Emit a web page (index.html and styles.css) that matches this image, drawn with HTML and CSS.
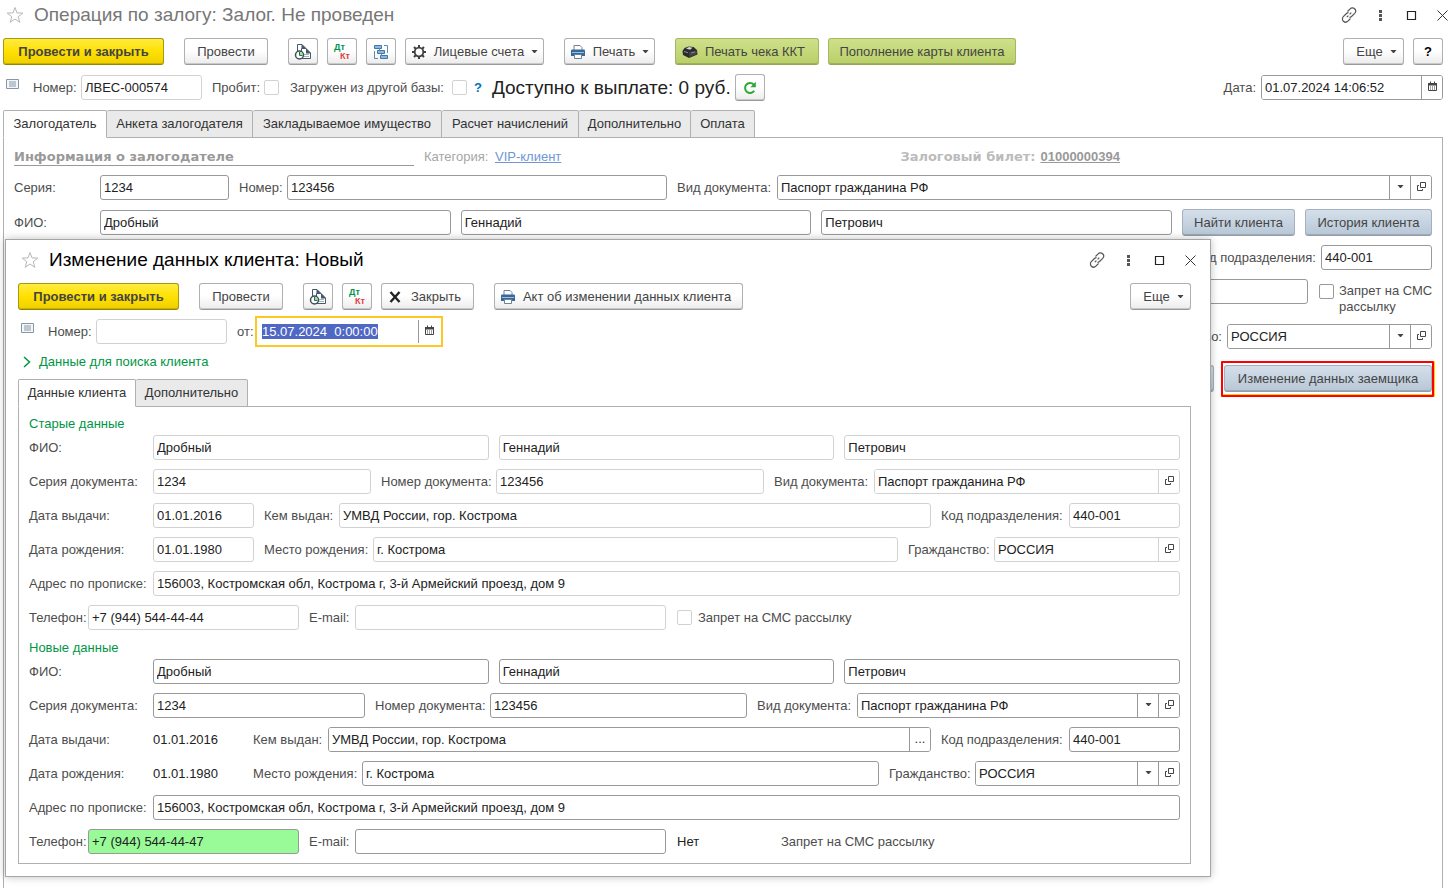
FILE: index.html
```html
<!DOCTYPE html>
<html lang="ru">
<head>
<meta charset="utf-8">
<title>Операция по залогу</title>
<link rel="stylesheet" href="styles.css">
</head>
<body>
<svg class="sprite" aria-hidden="true">
  <symbol id="i-star" viewBox="0 0 18 18"><path d="M9 1.500l2 5.400 5.800.2-4.600 3.600 1.600 5.600L9 13l-4.800 3.300 1.600-5.600L1.200 7.100 7 6.900z" fill="none" stroke="currentColor"/></symbol>
  <symbol id="i-link" viewBox="0 0 16 16"><path d="M6.500 4.500l2.600-2.600a3.100 3.100 0 0 1 4.600 4.400l-3.200 3.200a3 3 0 0 1-2 .8M9.500 11.500l-2.600 2.600a3.100 3.100 0 0 1-4.600-4.400l3.200-3.200a3 3 0 0 1 2-.8M5.800 10.200l1.600-1.600M8.600 7.400l1.700-1.700" fill="none" stroke="currentColor" stroke-width="1.200"/></symbol>
  <symbol id="i-dots" viewBox="0 0 16 16"><path d="M7 3h3v3H7zM7 7h3v3H7zM7 11h3v3H7z" fill="currentColor"/></symbol>
  <symbol id="i-max" viewBox="0 0 16 16"><path d="M4.500 4.500h8v8h-8z" fill="none" stroke="#222" stroke-width="1.200"/></symbol>
  <symbol id="i-close" viewBox="0 0 16 16"><path d="M3.500 3.500l10 10M13.500 3.500l-10 10" fill="none" stroke="#333"/></symbol>
  <symbol id="i-report" viewBox="0 0 18 18"><path d="M3.500 10V1.500H8l3.500 3.500V10z" fill="#fff" stroke="#46586a"/><path d="M7.500 1v4.500H12z" fill="#46586a"/><path d="M7.500 5.500H12l4.500 4.500v5.500h-9z" fill="#fff" stroke="#46586a"/><path d="M12 5v5.500h5z" fill="#46586a"/><path d="M10 11.500h5M10 13.500h5" stroke="#a3b1be"/><circle cx="5.500" cy="12" r="4" fill="#fff" stroke="#3d4c5c" stroke-width="1.500"/><path d="M5.500 9v3h3a3 3 0 0 0-3-3z" fill="#8fe39a"/><path d="M5.500 9v3.500h3" fill="none" stroke="#1f7a35"/></symbol>
  <symbol id="i-tree" viewBox="0 0 18 18"><g fill="#8fb6dc" stroke="#4278a5"><path d="M2.500 2.500h7v3h-7zM5.500 7.500h7v3h-7zM8.500 12.500h7v3h-7z"/></g><path d="M12 2.500h3.500V10M2.500 8v7.500H6M9.500 10.500v2M7.500 5.500v2" fill="none" stroke="#5c8cb4"/></symbol>
  <symbol id="i-gear" viewBox="0 0 16 16"><g stroke="#404040" fill="none"><circle cx="8" cy="8" r="4.300" stroke-width="1.800"/><path stroke-width="2" d="M8 1v3M8 12v3M1 8h3M12 8h3M3 3l2.200 2.200M10.800 10.800L13 13M13 3l-2.200 2.200M5.200 10.800L3 13"/></g></symbol>
  <symbol id="i-print" viewBox="0 0 16 16"><path d="M4 6V1.500h6l2 2V6" fill="#fff" stroke="#6d8296"/><path d="M1 6.500Q1 5.500 2 5.500h12q1 0 1 1V12H1z" fill="#376a98"/><path d="M2 8.500h12" stroke="#9cc0df"/><path d="M4.500 10.500h7v4h-7z" fill="#fff" stroke="#6d8296"/></symbol>
  <symbol id="i-kkt" viewBox="0 0 18 16"><path d="M1.500 7l2-3 4-1.500 5 .5 3.500 3 .5 4.500L8 14l-6-3z" fill="#2c2c2e"/><path d="M5 4.500l3-1.500 3.500.7-2.500 2z" fill="#d5d8d8"/><path d="M8 8l8-1.500-.5 4-7 2.500z" fill="#414345"/><path d="M3 7.500l4 1.200M10 9l4-1" stroke="#8a8d8e"/></symbol>
  <symbol id="i-refresh" viewBox="0 0 16 16"><path d="M12.200 10.800A5 5 0 1 1 11.500 4.300" fill="none" stroke="#2fa636" stroke-width="2"/><path d="M13.800 1.700v5.500H8.300z" fill="#2fa636"/></symbol>
  <symbol id="i-list" viewBox="0 0 14 12"><path d="M.5.5h12v9H.5z" fill="#f4f7fa" stroke="#8796a5"/><path d="M3 3h7M3 5h7M3 7h7" stroke="#8796a5"/></symbol>
  <symbol id="i-cal" viewBox="0 0 11 11"><path d="M1.500 2.500h8v7h-8z" fill="#fff" stroke="#444"/><path d="M1 2h9v2.500H1zM3 .5h1V2H3zM7 .5h1V2H7z" fill="#444"/><path d="M3 6h1M5 6h1M7 6h1M3 8h1M5 8h1M7 8h1" stroke="#444"/></symbol>
  <symbol id="i-open" viewBox="0 0 11 11"><path d="M4.500 1.500h5v5h-5z" fill="none" stroke="#444"/><path d="M3 4.500H1.500v5h5V8" fill="none" stroke="#444"/></symbol>
  <symbol id="i-down" viewBox="0 0 7 4"><path d="M0.500 0h6L4 3H3z" fill="#444"/></symbol>
  <symbol id="i-x" viewBox="0 0 14 14"><path d="M2.500 2L11.500 12M11.500 2L2.500 12" stroke="#222" stroke-width="2.400"/></symbol>
  <symbol id="i-chev" viewBox="0 0 8 12"><path d="M1 1l5.500 5L1 11" fill="none" stroke="#009646" stroke-width="1.500"/></symbol>
</svg>

<main class="window">
  <header class="titlebar">
    <svg class="star"><use href="#i-star"/></svg>
    <h1 class="title title-muted">Операция по залогу: Залог. Не проведен</h1>
    <div class="winbtns">
      <button class="winbtn" aria-label="Ссылка"><svg><use href="#i-link"/></svg></button>
      <button class="winbtn" aria-label="Меню"><svg><use href="#i-dots"/></svg></button>
      <button class="winbtn" aria-label="Развернуть"><svg><use href="#i-max"/></svg></button>
      <button class="winbtn" aria-label="Закрыть"><svg><use href="#i-close"/></svg></button>
    </div>
  </header>

  <div class="toolbar">
    <button class="btn btn-primary">Провести и закрыть</button>
    <button class="btn btn-post">Провести</button>
    <div class="btn-set">
      <button class="btn btn-icon" aria-label="Отчет"><svg class="ic18"><use href="#i-report"/></svg></button>
      <button class="btn btn-icon btn-dtkt"><span class="dt">Дт</span><span class="kt">Кт</span></button>
      <button class="btn btn-icon" aria-label="Структура"><svg class="ic18"><use href="#i-tree"/></svg></button>
      <button class="btn btn-accounts"><svg class="ic16"><use href="#i-gear"/></svg>Лицевые счета<svg class="caret"><use href="#i-down"/></svg></button>
    </div>
    <button class="btn btn-print"><svg class="ic16"><use href="#i-print"/></svg>Печать<svg class="caret"><use href="#i-down"/></svg></button>
    <div class="btn-set">
      <button class="btn btn-green btn-kkt"><svg class="ic18"><use href="#i-kkt"/></svg>Печать чека ККТ</button>
      <button class="btn btn-green btn-card">Пополнение карты клиента</button>
    </div>
    <div class="btn-set push">
      <button class="btn btn-more">Еще<svg class="caret"><use href="#i-down"/></svg></button>
      <button class="btn btn-icon btn-help">?</button>
    </div>
  </div>

  <div class="headrow">
    <svg class="list-ic"><use href="#i-list"/></svg>
    <label class="lbl num-lbl" for="m-num">Номер:</label>
    <input class="inp ro num-inp" id="m-num" value="ЛВЕС-000574">
    <label class="lbl check-lbl" for="m-prob">Пробит:</label>
    <input type="checkbox" class="chk ro" id="m-prob">
    <label class="lbl loaded-lbl" for="m-load">Загружен из другой базы:</label>
    <input type="checkbox" class="chk ro" id="m-load">
    <a class="hint" href="#">?</a>
    <span class="avail">Доступно к выплате: 0 руб.</span>
    <button class="btn btn-icon" aria-label="Обновить"><svg class="ic16"><use href="#i-refresh"/></svg></button>
    <label class="lbl push" for="m-date">Дата:</label>
    <span class="combo date-main"><input class="inp" id="m-date" value="01.07.2024 14:06:52"><button class="cb" aria-label="Календарь"><svg class="ic11"><use href="#i-cal"/></svg></button></span>
  </div>

  <nav class="tabs tabs-main">
    <button class="tab active">Залогодатель</button>
    <button class="tab t2">Анкета залогодателя</button>
    <button class="tab t3">Закладываемое имущество</button>
    <button class="tab t4">Расчет начислений</button>
    <button class="tab t5">Дополнительно</button>
    <button class="tab t6">Оплата</button>
  </nav>

  <section class="panel panel-main">
    <div class="inforow">
      <h2 class="section">Информация о залогодателе</h2>
      <span class="muted">Категория:</span>
      <a class="vip" href="#">VIP-клиент</a>
      <span class="ticket">Залоговый билет:</span>
      <a class="ticket-no" href="#">01000000394</a>
    </div>
    <div class="row m-doc">
      <label class="lbl" for="m-ser">Серия:</label><input class="inp" id="m-ser" value="1234">
      <label class="lbl" for="m-no">Номер:</label><input class="inp" id="m-no" value="123456">
      <label class="lbl" for="m-kind">Вид документа:</label>
      <span class="combo"><input class="inp" id="m-kind" value="Паспорт гражданина РФ"><button class="cb" aria-label="Выбрать"><svg class="caret"><use href="#i-down"/></svg></button><button class="cb" aria-label="Открыть"><svg class="ic11"><use href="#i-open"/></svg></button></span>
    </div>
    <div class="row m-fio">
      <label class="lbl" for="m-f">ФИО:</label>
      <div class="names"><input class="inp" id="m-f" value="Дробный"><input class="inp" aria-label="Имя" value="Геннадий"><input class="inp" aria-label="Отчество" value="Петрович"></div>
      <button class="btn btn-blue btn-find">Найти клиента</button>
      <button class="btn btn-blue btn-hist">История клиента</button>
    </div>
    <div class="row m-end">
      <label class="lbl" for="m-code">Код подразделения:</label><input class="inp w-code" id="m-code" value="440-001">
    </div>
    <div class="row m-end m-sms">
      <input class="inp w-mail" aria-label="E-mail">
      <input type="checkbox" class="chk" id="m-ban"><label class="lbl sms-lbl" for="m-ban">Запрет на СМС<br>рассылку</label>
    </div>
    <div class="row m-end">
      <label class="lbl" for="m-cit">Гражданство:</label>
      <span class="combo w-cit"><input class="inp" id="m-cit" value="РОССИЯ"><button class="cb" aria-label="Выбрать"><svg class="caret"><use href="#i-down"/></svg></button><button class="cb" aria-label="Открыть"><svg class="ic11"><use href="#i-open"/></svg></button></span>
    </div>
    <div class="row m-end m-actions">
      <button class="btn btn-blue">История</button>
      <span class="callout"><button class="btn btn-blue btn-change">Изменение данных заемщика</button></span>
    </div>
  </section>
</main>

<section class="dialog" role="dialog" aria-labelledby="d-title">
  <header class="titlebar">
    <svg class="star"><use href="#i-star"/></svg>
    <h1 class="title" id="d-title">Изменение данных клиента: Новый</h1>
    <div class="winbtns">
      <button class="winbtn" aria-label="Ссылка"><svg><use href="#i-link"/></svg></button>
      <button class="winbtn" aria-label="Меню"><svg><use href="#i-dots"/></svg></button>
      <button class="winbtn" aria-label="Развернуть"><svg><use href="#i-max"/></svg></button>
      <button class="winbtn" aria-label="Закрыть"><svg><use href="#i-close"/></svg></button>
    </div>
  </header>
  <div class="toolbar">
    <button class="btn btn-primary">Провести и закрыть</button>
    <button class="btn btn-post">Провести</button>
    <div class="btn-set">
      <button class="btn btn-icon" aria-label="Отчет"><svg class="ic18"><use href="#i-report"/></svg></button>
      <button class="btn btn-icon btn-dtkt"><span class="dt">Дт</span><span class="kt">Кт</span></button>
      <button class="btn btn-close"><svg class="ic14"><use href="#i-x"/></svg>Закрыть</button>
    </div>
    <button class="btn btn-act"><svg class="ic16"><use href="#i-print"/></svg>Акт об изменении данных клиента</button>
    <button class="btn btn-more push">Еще<svg class="caret"><use href="#i-down"/></svg></button>
  </div>
  <div class="headrow">
    <svg class="list-ic"><use href="#i-list"/></svg>
    <label class="lbl num-lbl" for="d-num">Номер:</label>
    <input class="inp ro d-num" id="d-num">
    <label class="lbl from-lbl" for="d-date">от:</label>
    <span class="combo date-focus"><input class="inp" id="d-date" value="15.07.2024  0:00:00"><button class="cb" aria-label="Календарь"><svg class="ic11"><use href="#i-cal"/></svg></button></span>
  </div>
  <button class="expander"><svg><use href="#i-chev"/></svg>Данные для поиска клиента</button>
  <nav class="tabs">
    <button class="tab active d1">Данные клиента</button>
    <button class="tab d2">Дополнительно</button>
  </nav>
  <div class="panel panel-dlg">
    <h2 class="group">Старые данные</h2>
    <div class="rows">
      <div class="row r-wide"><label class="lbl" for="o-f">ФИО:</label>
        <div class="names"><input class="inp ro" id="o-f" value="Дробный"><input class="inp ro" aria-label="Имя" value="Геннадий"><input class="inp ro" aria-label="Отчество" value="Петрович"></div></div>
      <div class="row o-doc"><label class="lbl" for="o-s">Серия документа:</label><input class="inp ro" id="o-s" value="1234">
        <label class="lbl" for="o-n">Номер документа:</label><input class="inp ro" id="o-n" value="123456">
        <label class="lbl" for="o-k">Вид документа:</label><span class="combo ro"><input class="inp" id="o-k" value="Паспорт гражданина РФ"><button class="cb" aria-label="Открыть"><svg class="ic11"><use href="#i-open"/></svg></button></span></div>
      <div class="row o-iss"><label class="lbl" for="o-d">Дата выдачи:</label><input class="inp ro" id="o-d" value="01.01.2016">
        <label class="lbl" for="o-w">Кем выдан:</label><input class="inp ro" id="o-w" value="УМВД России, гор. Кострома">
        <label class="lbl" for="o-c">Код подразделения:</label><input class="inp ro" id="o-c" value="440-001"></div>
      <div class="row o-birth"><label class="lbl" for="o-b">Дата рождения:</label><input class="inp ro" id="o-b" value="01.01.1980">
        <label class="lbl" for="o-p">Место рождения:</label><input class="inp ro" id="o-p" value="г. Кострома">
        <label class="lbl" for="o-z">Гражданство:</label><span class="combo ro"><input class="inp" id="o-z" value="РОССИЯ"><button class="cb" aria-label="Открыть"><svg class="ic11"><use href="#i-open"/></svg></button></span></div>
      <div class="row r-wide"><label class="lbl" for="o-a">Адрес по прописке:</label><input class="inp ro" id="o-a" value="156003, Костромская обл, Кострома г, 3-й Армейский проезд, дом 9"></div>
      <div class="row r-phone"><label class="lbl" for="o-t">Телефон:</label><input class="inp ro" id="o-t" value="+7 (944) 544-44-44">
        <label class="lbl" for="o-e">E-mail:</label><input class="inp ro" id="o-e">
        <span class="ban"><input type="checkbox" class="chk ro" id="o-x"><label class="lbl" for="o-x">Запрет на СМС рассылку</label></span></div>
    </div>
    <h2 class="group">Новые данные</h2>
    <div class="rows">
      <div class="row r-wide"><label class="lbl" for="n-f">ФИО:</label>
        <div class="names"><input class="inp" id="n-f" value="Дробный"><input class="inp" aria-label="Имя" value="Геннадий"><input class="inp" aria-label="Отчество" value="Петрович"></div></div>
      <div class="row n-doc"><label class="lbl" for="n-s">Серия документа:</label><input class="inp" id="n-s" value="1234">
        <label class="lbl" for="n-n">Номер документа:</label><input class="inp" id="n-n" value="123456">
        <label class="lbl" for="n-k">Вид документа:</label><span class="combo"><input class="inp" id="n-k" value="Паспорт гражданина РФ"><button class="cb" aria-label="Выбрать"><svg class="caret"><use href="#i-down"/></svg></button><button class="cb" aria-label="Открыть"><svg class="ic11"><use href="#i-open"/></svg></button></span></div>
      <div class="row n-iss"><span class="lbl">Дата выдачи:</span><span class="val">01.01.2016</span>
        <label class="lbl" for="n-w">Кем выдан:</label><span class="combo"><input class="inp" id="n-w" value="УМВД России, гор. Кострома"><button class="cb">...</button></span>
        <label class="lbl" for="n-c">Код подразделения:</label><input class="inp" id="n-c" value="440-001"></div>
      <div class="row n-birth"><span class="lbl">Дата рождения:</span><span class="val">01.01.1980</span>
        <label class="lbl" for="n-p">Место рождения:</label><input class="inp" id="n-p" value="г. Кострома">
        <label class="lbl" for="n-z">Гражданство:</label><span class="combo"><input class="inp" id="n-z" value="РОССИЯ"><button class="cb" aria-label="Выбрать"><svg class="caret"><use href="#i-down"/></svg></button><button class="cb" aria-label="Открыть"><svg class="ic11"><use href="#i-open"/></svg></button></span></div>
      <div class="row r-wide"><label class="lbl" for="n-a">Адрес по прописке:</label><input class="inp" id="n-a" value="156003, Костромская обл, Кострома г, 3-й Армейский проезд, дом 9"></div>
      <div class="row r-phone"><label class="lbl" for="n-t">Телефон:</label><input class="inp changed" id="n-t" value="+7 (944) 544-44-47">
        <label class="lbl" for="n-e">E-mail:</label><input class="inp" id="n-e">
        <span class="ban"><span class="val no">Нет</span><span class="lbl">Запрет на СМС рассылку</span></span></div>
    </div>
  </div>
</section>
<script src="app.js"></script>
</body>
</html>
```
FILE: styles.css
```css
* { box-sizing: border-box; }
html, body { height: 100%; }
body { margin: 0; overflow: hidden; background: #fff; color: #333; font: 13px/16px "Liberation Sans", Arial, sans-serif; }
h1, h2 { margin: 0; font-weight: normal; }
button, input { margin: 0; font: inherit; color: inherit; }
svg { display: block; flex: none; }
.sprite { display: none; }
.ic18 { width: 18px; height: 18px; }
.ic16 { width: 16px; height: 16px; }
.ic14 { width: 14px; height: 14px; }
.ic11 { width: 11px; height: 11px; }
.caret { width: 7px; height: 4px; }
.push { margin-left: auto; }

.window { display: flex; flex-direction: column; height: 100%; padding: 0 5px 0 3px; }
.titlebar { display: flex; align-items: center; height: 32px; padding-left: 3px; }
.window > .titlebar { height: 30px; }
.star { width: 18px; height: 18px; color: #b4b8bc; }
.title { margin-left: 10px; font-size: 19px; line-height: 24px; color: #000; }
.title-muted { color: #777; }
.winbtns { display: flex; gap: 15px; margin-left: auto; margin-right: -7px; }
.winbtn { width: 16px; height: 16px; padding: 0; border: 0; background: none; color: #555; }
.winbtn svg { width: 16px; height: 16px; }

.toolbar { display: flex; gap: 20px; height: 27px; margin-top: 8px; }
.btn-set { display: flex; gap: 10px; }
.btn-set.push { gap: 9px; }
.btn { display: flex; align-items: center; justify-content: center; height: 27px; padding: 0 8px; border: 1px solid #b0b0b0; border-bottom-color: #999; border-radius: 3px; background: linear-gradient(#fff 45%, #ececec); box-shadow: inset 0 -1px rgba(0, 0, 0, .15); color: #444; white-space: nowrap; }
.btn-primary { width: 161px; border-color: #a89a10 #a89a10 #958700; background: linear-gradient(#ffec40, #ffe000 50%, #efd000); font-weight: bold; }
.btn-post { width: 84px; }
.btn-icon { width: 30px; padding: 0; }
.btn-set > .btn-icon + .btn-icon { margin-left: -1px; }
.btn-accounts { width: 139px; gap: 7px; margin-left: -1px; }
.btn-print { width: 91px; gap: 7px; }
.btn-close { width: 93px; gap: 9px; margin-left: -1px; padding-right: 14px; }
.btn-act { width: 249px; gap: 7px; padding-right: 14px; }
.btn-kkt { width: 144px; gap: 6px; padding-right: 16px; }
.btn-card { width: 188px; margin-left: -1px; }
.btn-more { width: 61px; gap: 7px; padding-left: 14px; }
.btn-help { color: #000; font-weight: bold; }
.btn-green { border-color: #a3b860 #a3b860 #93a650; background: linear-gradient(#cfe08a, #b9cf68); }
.btn-blue { border-color: #a4b1bf #a4b1bf #929eaa; background: linear-gradient(#d4dfea, #b8c7d6); }
.btn-dtkt { position: relative; font-size: 9px; line-height: 8px; font-weight: bold; }
.dt, .kt { position: absolute; }
.dt { left: 6px; top: 4px; color: #00964a; }
.kt { left: 12px; top: 13px; color: #dc4444; }

.headrow { display: flex; align-items: center; height: 27px; margin-top: 9px; }
.list-ic { width: 14px; height: 12px; margin: 0 0 5px 3px; }
.lbl { color: #4d4d4d; white-space: nowrap; }
.num-lbl { width: 48px; margin-left: 13px; }
.inp { min-width: 0; width: 100%; height: 25px; padding: 0 3px; border: 1px solid #999; border-radius: 3px; background: #fff; color: #222; outline: 0; }
.inp.ro, .combo.ro, .chk.ro { border-color: #d2d2d2; }
.num-inp { width: 121px; }
.check-lbl { width: 52px; margin-left: 10px; }
.chk { appearance: none; flex: none; width: 15px; height: 15px; border: 1px solid #999; border-radius: 2px; background: #fff; }
.loaded-lbl { width: 162px; margin-left: 11px; }
.hint { margin: 0 10px 0 7px; color: #0072bc; font-weight: bold; text-decoration: none; }
.avail { width: 243px; font-size: 19px; line-height: 24px; color: #222; white-space: nowrap; }
.combo { display: flex; height: 25px; border: 1px solid #999; border-radius: 3px; background: #fff; overflow: hidden; }
.combo .inp { flex: 1; height: 23px; border: 0; border-radius: 0; }
.cb { display: flex; align-items: center; justify-content: center; flex: none; width: 21px; padding: 0 0 2px; border: 0; border-left: 1px solid #999; background: #fff; }
.combo.ro .cb { border-color: #d2d2d2; }
.date-main { width: 182px; margin-left: 5px; }

.tabs { display: flex; height: 28px; position: relative; margin-bottom: -1px; }
.tabs-main { margin-top: 9px; }
.tab { height: 28px; padding: 0; border: 1px solid #b0b0b0; border-left-width: 0; border-radius: 2px 2px 0 0; background: #eaeaea; color: #333; white-space: nowrap; }
.tab.active { width: 104px; border-left-width: 1px; border-bottom-color: #fff; background: #fff; }
.t2 { width: 146px; } .t3 { width: 189px; } .t4 { width: 137px; } .t5 { width: 112px; } .t6 { width: 64px; }
.tab.d1 { width: 118px; } .d2 { width: 112px; }
.panel { border: 1px solid #b0b0b0; }
.panel-main { flex: 1; padding: 8px 10px 0; border-bottom: 0; }

.inforow { display: flex; align-items: center; height: 22px; }
.section { width: 400px; height: 18px; border-bottom: 1px solid #999; font: bold 13px/17px "DejaVu Sans", sans-serif; color: #999; white-space: nowrap; }
.muted { width: 71px; margin-left: 10px; color: #a6a6a6; }
.vip { color: #6f97d6; }
.ticket { margin-left: auto; font: bold 13px/18px "DejaVu Sans", sans-serif; color: #bbb; }
.ticket-no { margin: 0 312px 0 5px; color: #999; font-weight: bold; }

.row { display: grid; align-items: center; min-height: 25px; }
.row > .lbl ~ .lbl { padding-left: 10px; }
.names { display: grid; grid-template-columns: 1fr 1fr 1fr; gap: 10px; }
.m-doc { grid-template-columns: 86px 129px 58px 380px 110px 1fr; margin-top: 7px; }
.m-fio { grid-template-columns: 86px 1fr 123px 137px; margin-top: 9px; }
.m-fio .btn { margin-left: 10px; }
.m-end { display: flex; justify-content: flex-end; gap: 5px; margin-top: 9px; }
.w-code { width: 111px; }
.w-mail { width: 350px; margin-right: 6px; }
.w-cit { width: 205px; }
.m-sms { height: 36px; align-items: flex-start; }
.m-sms .chk { margin-top: 5px; }
.sms-lbl { width: 93px; margin-top: 4px; }
.m-actions { gap: 10px; margin-top: 16px; }
.btn-change { width: 208px; }
.callout { margin: -4px -2px -5px -3px; padding: 2px 0 3px 1px; border: 2px solid #f00; border-radius: 1px; box-shadow: 1px 0 #ffd200, inset 0 -1px #ffd200; }

.dialog { position: absolute; left: 5px; right: 237px; top: 239px; padding: 4px 19px 12px 12px; border: 1px solid #a6a6a6; background: #fff; box-shadow: 0 0 8px rgba(0, 0, 0, .25); }
.dialog .toolbar { margin-top: 7px; }
.dialog .headrow { margin-top: 8px; }
.d-num { width: 131px; }
.from-lbl { width: 18px; margin-left: 10px; }
.combo.date-focus { width: 188px; height: 31px; padding: 2px; border: 2px solid #fbc921; border-radius: 0; }
.date-focus .inp { height: 23px; }
.inp::selection { background: #4e68c4; color: #fff; }
.expander { display: flex; align-items: center; gap: 8px; height: 18px; margin: 8px 0 8px 5px; padding: 0; border: 0; background: none; color: #009646; }
.expander svg { width: 8px; height: 12px; }
.panel-dlg { padding: 9px 10px; }
.group { height: 16px; margin-bottom: 3px; color: #009646; font-size: 13px; line-height: 16px; }
.rows { display: grid; gap: 9px; }
.rows + .group { margin-top: 10px; }
.r-wide { grid-template-columns: 124px 1fr; }
.o-doc { grid-template-columns: 124px 218px 125px 1fr 110px 306px; }
.o-iss { grid-template-columns: 124px 101px 85px 1fr 138px 111px; }
.o-birth { grid-template-columns: 124px 101px 119px 1fr 96px 186px; }
.n-doc { grid-template-columns: 124px 212px 125px 1fr 110px 323px; }
.n-iss { grid-template-columns: 124px 90px 85px 1fr 138px 111px; }
.n-birth { grid-template-columns: 124px 90px 119px 1fr 96px 205px; }
.r-phone { grid-template-columns: 59px 211px 56px 311px 1fr; }
.ban { display: flex; align-items: center; gap: 6px; padding-left: 11px; }
.val { color: #222; }
.no { width: 98px; }
.inp.changed { background: #98fb98; }
```
FILE: app.js
```js
const dateInput = document.getElementById("d-date");
dateInput.focus();
dateInput.select();
```
